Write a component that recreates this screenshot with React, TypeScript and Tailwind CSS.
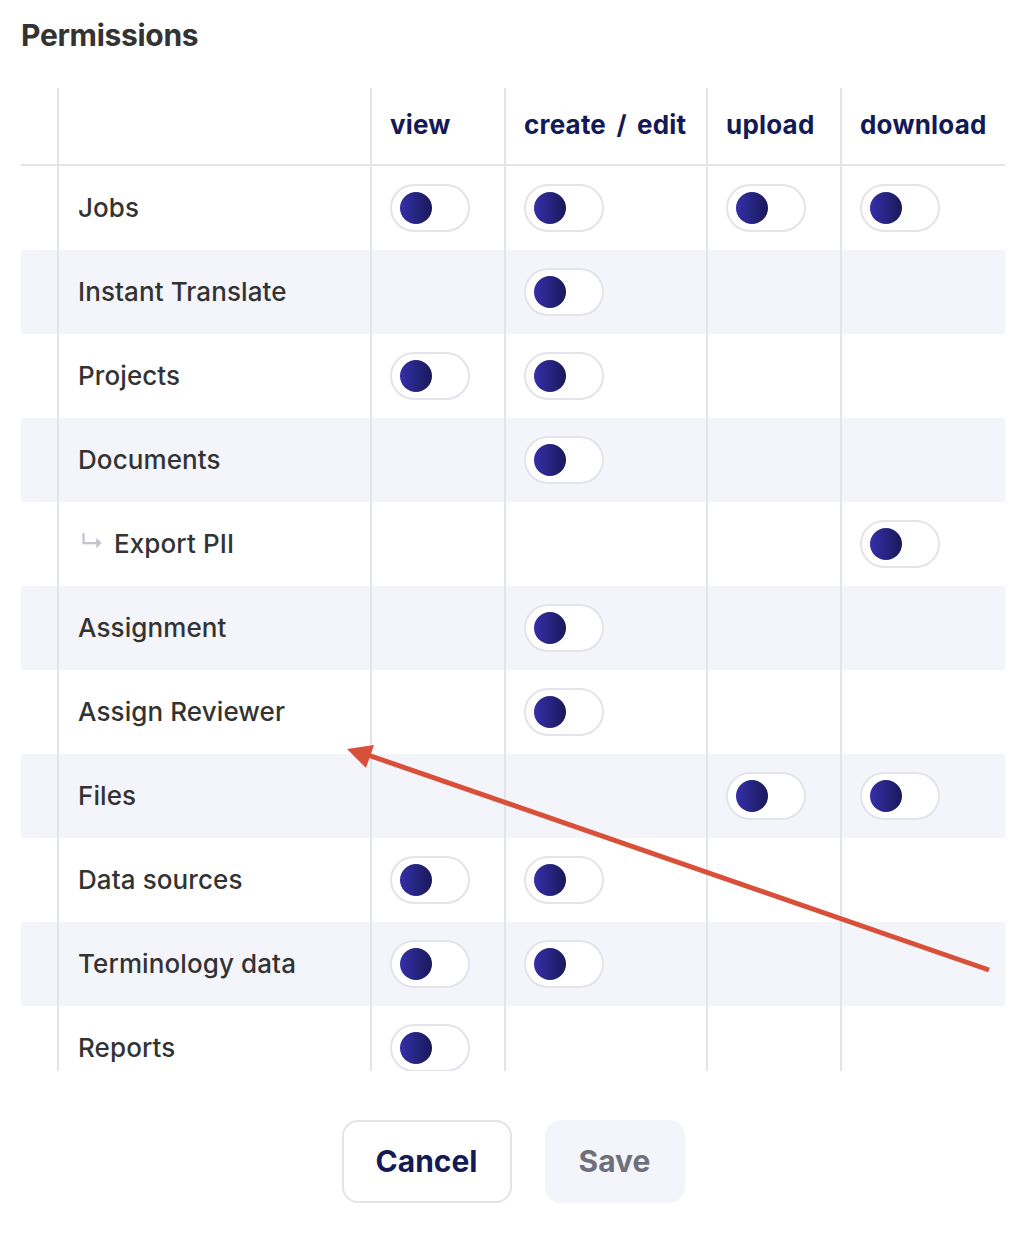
import { ReactNode } from 'react';

type Row = {
  label: string;
  sub?: boolean;
  perms: [boolean, boolean, boolean, boolean];
};

const rows: Row[] = [
  { label: 'Jobs', perms: [true, true, true, true] },
  { label: 'Instant Translate', perms: [false, true, false, false] },
  { label: 'Projects', perms: [true, true, false, false] },
  { label: 'Documents', perms: [false, true, false, false] },
  { label: 'Export PII', sub: true, perms: [false, false, false, true] },
  { label: 'Assignment', perms: [false, true, false, false] },
  { label: 'Assign Reviewer', perms: [false, true, false, false] },
  { label: 'Files', perms: [false, false, true, true] },
  { label: 'Data sources', perms: [true, true, false, false] },
  { label: 'Terminology data', perms: [true, true, false, false] },
  { label: 'Reports', perms: [true, false, false, false] },
];

const columns = ['view', 'create / edit', 'upload', 'download'];

const gridCols = 'grid grid-cols-[36px_313px_134px_202px_134px_165px]';

const Toggle = () => (
  <div className="flex items-center w-[80px] h-[48px] rounded-full border-2 border-[#e3e3ea] bg-white pl-[8px]">
    <div className="w-[32px] h-[32px] rounded-full bg-linear-to-r from-[#3430aa] to-[#19195a]" />
  </div>
);

const Cell = ({ children, className = '' }: { children?: ReactNode; className?: string }) => (
  <div className={`border-l-2 border-[#e3e3ea] flex items-center pl-[18px] ${className}`}>{children}</div>
);

const App = () => {
  return (
    <div className="relative w-[1036px] h-[1234px] bg-white font-['Inter',sans-serif] text-[#333333]">
      <div className="pl-[21px] pr-[31px]">
        <h1 className="pt-[16px] h-[88px] text-[30px] font-bold tracking-[-0.3px] text-[#333333] leading-[38px]">
          Permissions
        </h1>

        <div className="h-[983px] overflow-hidden">
          <div className={`${gridCols} h-[78px] border-b-2 border-[#e3e3ea]`}>
            <div />
            <Cell />
            {columns.map((c) => (
              <Cell
                key={c}
                className="pb-[4px] text-[26px] font-bold text-[#141a55] tracking-[0.2px] [word-spacing:4px] whitespace-nowrap"
              >
                {c}
              </Cell>
            ))}
          </div>

          {rows.map((row, i) => (
            <div
              key={row.label}
              className={`${gridCols} h-[84px] ${i % 2 === 1 ? 'bg-[#f4f5fa]' : 'bg-white'}`}
            >
              <div />
              <Cell className="text-[26px] font-medium pl-[19px] pb-[2px] tracking-[0.1px]">
                {row.sub && <span className="text-[#c4c4cc] text-[24px] mr-[10px] ml-[2px]">↳</span>}
                {row.label}
              </Cell>
              {row.perms.map((p, j) => (
                <Cell key={j}>{p && <Toggle />}</Cell>
              ))}
            </div>
          ))}
        </div>

        <div className="flex justify-center gap-[33px] mt-[49px]">
          <button className="w-[170px] h-[83px] rounded-[16px] border-2 border-[#e3e3ea] bg-white text-[30px] font-bold text-[#141a55]">
            Cancel
          </button>
          <button className="w-[140px] h-[83px] rounded-[16px] bg-[#f4f5fa] text-[30px] font-bold text-[#6e717b]">
            Save
          </button>
        </div>
      </div>

      <svg className="absolute inset-0 pointer-events-none" width="1036" height="1234">
        <line x1="989" y1="970" x2="368" y2="755" stroke="#d9503a" strokeWidth="5" />
        <polygon points="347,749 374,745 366,768" fill="#d9503a" />
      </svg>
    </div>
  );
};

export default App;
